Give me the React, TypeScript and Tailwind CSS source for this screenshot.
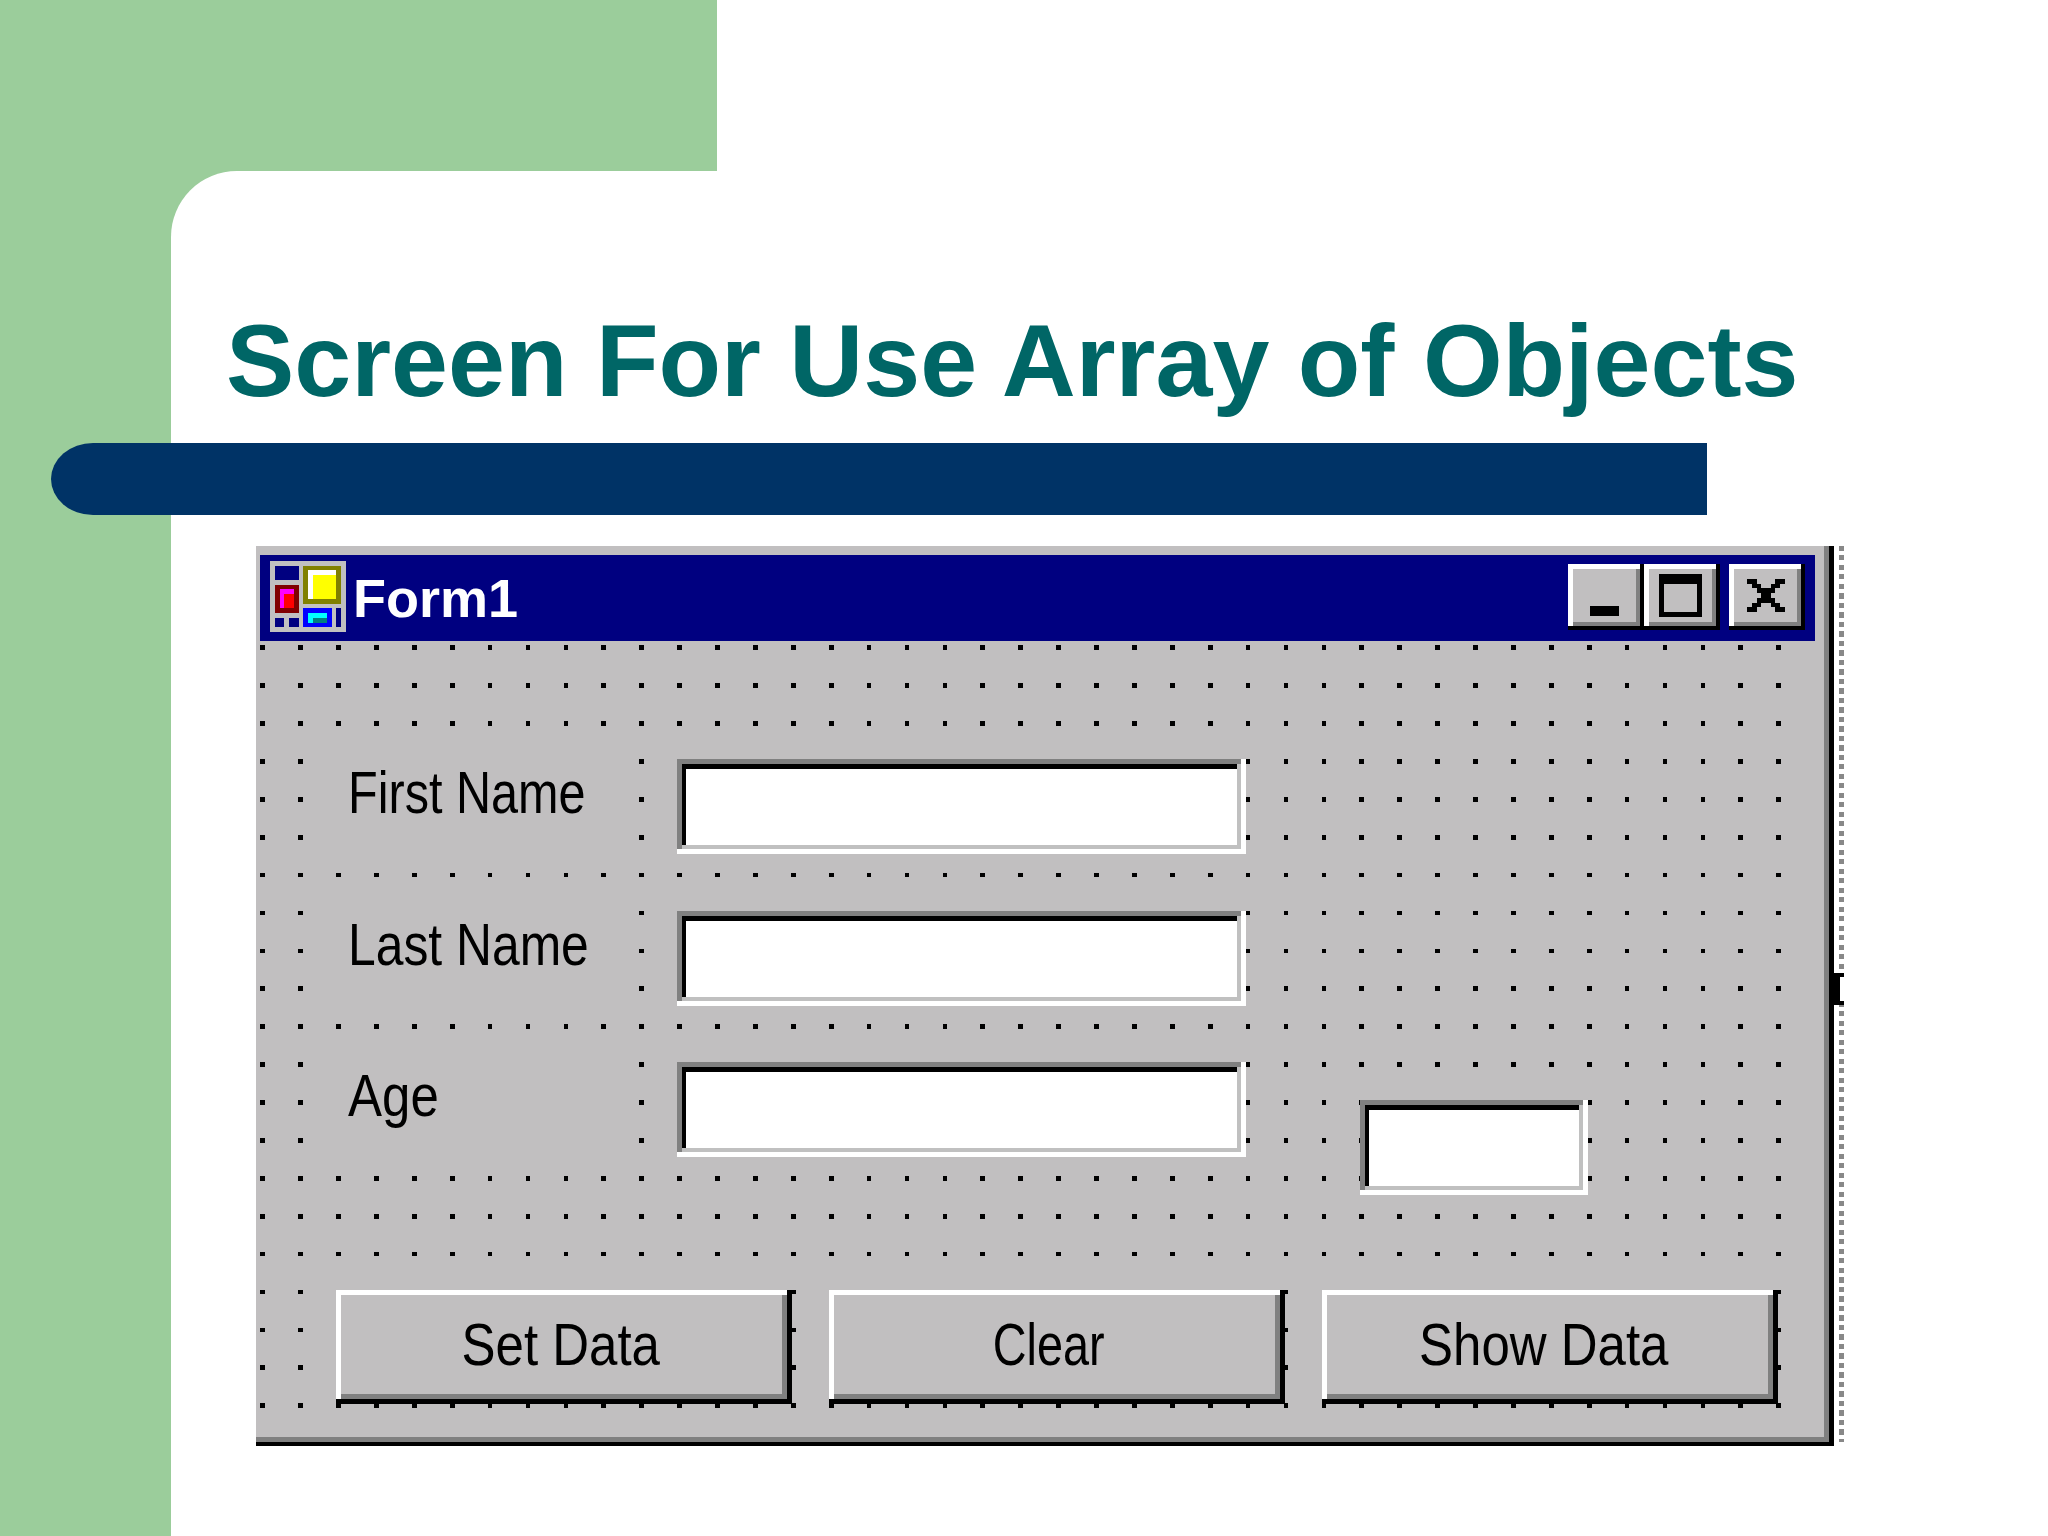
import React from "react";

const dots: { x: number; y: number }[] = [];
for (let r = 0; r < 21; r++) {
  for (let c = 0; c < 41; c++) {
    dots.push({ x: 4.3 + c * 37.9, y: 4.3 + r * 37.9 });
  }
}

// 16x15 form icon from the title bar
const iconRects = [
  { x: 1, y: 1, w: 5, h: 3, f: "#000080" },
  { x: 1, y: 5, w: 5, h: 6, f: "#800000" },
  { x: 2, y: 6, w: 3, h: 4, f: "#ff00ff" },
  { x: 3, y: 7, w: 2, h: 3, f: "#ff0000" },
  { x: 7, y: 1, w: 8, h: 8, f: "#808000" },
  { x: 8, y: 2, w: 6, h: 6, f: "#ffffff" },
  { x: 9, y: 3, w: 5, h: 5, f: "#ffff00" },
  { x: 7, y: 10, w: 6, h: 4, f: "#0000ff" },
  { x: 8, y: 11, w: 4, h: 2, f: "#00ffff" },
  { x: 9, y: 12, w: 3, h: 1, f: "#008080" },
  { x: 1, y: 12, w: 2, h: 2, f: "#000080" },
  { x: 4, y: 12, w: 2, h: 2, f: "#000080" },
  { x: 14, y: 10, w: 1, h: 4, f: "#000080" },
];

function FormIcon() {
  return (
    <svg viewBox="0 0 16 15" className="w-[76px] h-[71px] shrink-0 -mt-[3px]" shapeRendering="crispEdges">
      <rect width="16" height="15" fill="#c0c0c0" />
      {iconRects.map((r, i) => (
        <rect key={i} x={r.x} y={r.y} width={r.w} height={r.h} fill={r.f} />
      ))}
    </svg>
  );
}

function CloseGlyph() {
  return (
    <svg viewBox="0 0 8 7" className="w-[38px] h-[33px]" shapeRendering="crispEdges" fill="#000">
      <path d="M0 0h2v1h1v1h2V1h1V0h2v1H7v1H6v1H5v1h1v1h1v1h1v1H6V6H5V5H3v1H2v1H0V6h1V5h1V4h1V3H2V2H1V1H0z" />
    </svg>
  );
}

function CaptionButton({ children, className }: { children: React.ReactNode; className?: string }) {
  return (
    <div className={"w-[76px] h-[66px] bg-black pr-[4px] pb-[4px] " + (className ?? "")}>
      <div className="h-full bg-white pt-[5px] pl-[5px]">
        <div className="h-full bg-[#808080] pr-[4px] pb-[4px]">
          <div className="h-full bg-[#c1bfc0] flex items-center justify-center">{children}</div>
        </div>
      </div>
    </div>
  );
}

function TextBox({ className }: { className: string }) {
  return (
    <div className={"h-[95px] bg-white pr-[5px] pb-[5px] " + className}>
      <div className="h-full bg-[#808080] pt-[5px] pl-[5px]">
        <div className="h-full bg-[#c0c0c0] pr-[4px] pb-[4px]">
          <div className="h-full bg-black pt-[5px] pl-[4px]">
            <div className="h-full bg-white" />
          </div>
        </div>
      </div>
    </div>
  );
}

function Label({ text, stretch }: { text: string; stretch: string }) {
  return (
    <div className="w-[302px] h-[95px] bg-[#c1bfc0] pl-[12px] -mt-[1px] shrink-0">
      <div className={"text-[60px] leading-[69px] text-black whitespace-nowrap origin-left " + stretch}>{text}</div>
    </div>
  );
}

function FormButton({ text, stretch, shift }: { text: string; stretch: string; shift: string }) {
  return (
    <div className="w-[456px] h-[114px] bg-black pr-[5px] pb-[5px]">
      <div className="h-full bg-white pt-[5px] pl-[5px]">
        <div className="h-full bg-[#808080] pr-[5px] pb-[5px]">
          <div className={"h-full bg-[#c1bfc0] flex items-center justify-center " + shift}>
            <span className={"text-[60px] leading-none text-black whitespace-nowrap " + stretch}>{text}</span>
          </div>
        </div>
      </div>
    </div>
  );
}

export default function App() {
  return (
    <div className="w-[2048px] h-[1536px] flex flex-col bg-white overflow-hidden font-['Liberation_Sans',Arial,sans-serif]">
      <div className="w-[717px] h-[171px] shrink-0 bg-[#9bcd9b]" />
      <div className="flex-1 flex bg-[#9bcd9b]">
        <div className="w-[171px] shrink-0" />
        <div className="flex-1 bg-white rounded-tl-[66px] pt-[135px] flex flex-col">
          {/* Title */}
          <h1 className="ml-[55px] text-[102.4px] leading-[110px] font-bold text-[#006666] whitespace-nowrap">
            Screen For Use Array of Objects
          </h1>
          {/* Bar */}
          <div className="-ml-[120px] mt-[27px] w-[1656px] h-[72px] bg-[#003366] rounded-l-[42px_36px]" />

          {/* VB form designer */}
          <div className="ml-[85px] mt-[31px] flex">
            <div className="w-[1578px] h-[900px] bg-black pr-[5px] pb-[4px] shrink-0">
              <div className="h-full bg-[#808080] pr-[5px] pb-[5px]">
                <div className="h-full bg-[#c1bfc0] pt-[9px] pl-[4px] flex flex-col">
                  <div className="w-[1555px] h-[86px] bg-[#000080] flex items-center pl-[10px] shrink-0">
                    <FormIcon />
                    <span className="ml-[7px] text-[54px] leading-none font-bold text-white">Form1</span>
                    <div className="ml-auto mr-[10px] flex -mt-[2px]">
                      <CaptionButton>
                        <div className="w-[29px] h-[10px] bg-black mt-[31px]" />
                      </CaptionButton>
                      <CaptionButton>
                        <div className="w-[43px] h-[43px] border-[5px] border-t-[10px] border-black" />
                      </CaptionButton>
                      <CaptionButton className="ml-[9px]">
                        <CloseGlyph />
                      </CaptionButton>
                    </div>
                  </div>

                  <div className="relative flex-1 -ml-[4px] pt-[118px] pl-[80px] flex flex-col gap-[57px]">
                    <svg className="absolute inset-0 w-full h-full" shapeRendering="crispEdges">
                      {dots.map((d, i) => (
                        <rect key={i} x={d.x} y={d.y} width="4.75" height="4.75" fill="#000" />
                      ))}
                    </svg>
                    <div className="relative flex gap-[39px]">
                      <Label text="First Name" stretch="scale-x-[0.81]" />
                      <TextBox className="w-[569px]" />
                    </div>
                    <div className="relative flex gap-[39px] -mb-[1px]">
                      <Label text="Last Name" stretch="scale-x-[0.83]" />
                      <TextBox className="w-[569px]" />
                    </div>
                    <div className="relative flex gap-[39px] h-[133px]">
                      <Label text="Age" stretch="scale-x-[0.85]" />
                      <TextBox className="w-[569px]" />
                      <TextBox className="w-[228px] mt-[38px] ml-[75px]" />
                    </div>
                    <div className="relative flex gap-[37px] mt-[38px]">
                      <FormButton text="Set Data" stretch="scale-x-[0.85]" shift="pr-[1px]" />
                      <FormButton text="Clear" stretch="scale-x-[0.78]" shift="pr-[12px]" />
                      <FormButton text="Show Data" stretch="scale-x-[0.85]" shift="pr-[7px]" />
                    </div>
                  </div>
                </div>
              </div>
            </div>

            {/* Selection edge */}
            <div className="relative ml-[5px] w-[5px] h-[896px] bg-[repeating-linear-gradient(to_bottom,#888888_0,#888888_5px,#ffffff_5px,#ffffff_9.5px)]">
              <div className="absolute left-[-6px] top-[427px] w-[11px] h-[32px] border-y-[4px] border-l-[7px] border-black bg-white" />
            </div>
          </div>
        </div>
      </div>
    </div>
  );
}
